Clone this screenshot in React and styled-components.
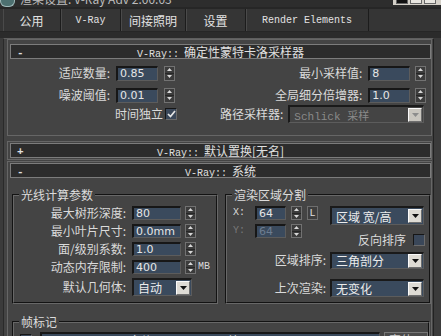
import React from 'react';
import styled, { createGlobalStyle } from 'styled-components';

const CJK = '"Noto Sans CJK SC", "Liberation Sans", sans-serif';
const MONO = '"Liberation Mono", "Noto Sans CJK SC", monospace';
const NUM = '"DejaVu Sans", "Liberation Sans", sans-serif';

const GlobalStyle = createGlobalStyle`
  html, body { margin: 0; padding: 0; background: #3b3b3b; overflow: hidden; }
  * { box-sizing: border-box; }
`;

const Window = styled.div`
  width: 441px;
  height: 336px;
  overflow: hidden;
  display: flex;
  flex-direction: column;
  background: #3b3b3b;
  font-family: ${CJK};
  font-size: 12px;
  color: #dadada;
`;

/* title bar (mostly cut off) */
const TitleBar = styled.div`
  height: 9px;
  flex-shrink: 0;
  display: flex;
  align-items: flex-end;
  background: #2d2d2d;
  border-bottom: 2px solid #262626;
  overflow: hidden;
`;
const TitleIcon = styled.div`
  align-self: flex-start;
  width: 15px;
  height: 7px;
  margin-right: 5px;
  background: #4d7070;
  border: 1px solid #9fb8b8;
  border-top: none;
  border-radius: 0 0 6px 6px;
`;
const TitleText = styled.span`
  line-height: 16px;
  color: #bdbdbd;
  white-space: nowrap;
`;
const WinButtons = styled.div`
  align-self: flex-start;
  margin-left: auto;
  width: 48px;
  height: 5px;
  display: flex;
  gap: 2px;
  padding: 0 3px;
  background: #d4d0c8;
`;
const WinBtn = styled.div`
  width: 12px;
  height: 4px;
  background: ${p => (p.$dark ? '#111' : '#e8e6e0')};
  border: 1px solid #666;
  border-top: none;
`;

/* tabs */
const TabBar = styled.div`
  height: 23px;
  flex-shrink: 0;
  display: flex;
  padding-left: 3px;
  background: #353535;
  border-bottom: 1px solid #262626;
`;
const Tab = styled.div`
  width: ${p => p.$w}px;
  display: flex;
  align-items: center;
  justify-content: center;
  font-family: ${p => (p.$mono ? MONO : CJK)};
  font-size: ${p => (p.$mono ? 10 : 12)}px;
  color: #e2e2e2;
  border-right: 1px solid #1c1c1c;
  box-shadow: inset 1px 0 0 #4a4a4a;
`;
const TabGap = styled.div`
  height: 6px;
  flex-shrink: 0;
  background: #2b2b2b;
`;

/* rollout panel */
const Panel = styled.div`
  flex: 1;
  min-height: 0;
  margin: 0 7px 0 3px;
  padding: 0 1px 0 3px;
  background: #444;
  border-top: 1px solid #5e5e5e;
  border-left: 1px solid #2a2a2a;
  border-right: 1px solid #222;
  display: flex;
  flex-direction: column;
  overflow: hidden;
`;
const Rollout = styled.section`
  flex-shrink: 0;
  margin-top: ${p => p.$mt || 0}px;
  padding: ${p => p.$pt || 0}px 0 ${p => p.$pb || 0}px;
  border: 1px solid #666;
`;
const RolloutHeader = styled.div`
  height: 15px;
  margin-left: 2px;
  border: 1px solid #7c7c7c;
  background: #2c2c2c;
  display: grid;
  grid-template-columns: 18px 1fr 18px;
  align-items: center;
  line-height: 13px;
  color: #e0e0e0;
`;
const Sign = styled.span`
  padding-left: 6px;
  font-family: ${MONO};
  font-size: 11px;
  font-weight: bold;
`;
const HeaderTitle = styled.span`
  text-align: center;
  white-space: nowrap;
`;
const Latin = styled.span`
  font-family: ${MONO};
  font-size: 10px;
  margin-right: 5px;
`;

/* sampler rollout body */
const SamplerGrid = styled.div`
  display: grid;
  grid-template-columns: 212px 1fr;
  grid-template-rows: 22px 22px 16px;
  margin-top: 3px;
`;
const Cell = styled.div`
  display: flex;
  align-items: center;
  justify-content: flex-end;
  padding-right: ${p => p.$pr}px;
`;

/* generic controls */
const Row = styled.div`
  display: flex;
  align-items: center;
  height: ${p => p.$h}px;
  margin-top: ${p => p.$mt || 0}px;
  justify-content: ${p => (p.$end ? 'flex-end' : 'flex-start')};
  padding-right: ${p => p.$pr || 0}px;
`;
const Label = styled.span`
  flex-shrink: 0;
  white-space: nowrap;
  width: ${p => (p.$w ? `${p.$w}px` : 'auto')};
  text-align: ${p => (p.$left ? 'left' : 'right')};
  padding-left: ${p => p.$pl || 0}px;
  padding-right: ${p => p.$pr || 0}px;
  margin-right: ${p => p.$mr || 0}px;
  color: ${p => (p.$dim ? '#7a7a7a' : '#dadada')};
  font-family: ${p => (p.$mono ? MONO : CJK)};
  font-size: ${p => (p.$mono ? 10 : 12)}px;
  line-height: 14px;
`;
const Field = styled.div`
  flex-shrink: 0;
  width: ${p => p.$w}px;
  height: ${p => p.$h || 14}px;
  margin-left: ${p => p.$ml || 0}px;
  background: #3a4a5d;
  border-style: solid;
  border-width: 2px 1px 1px 2px;
  border-color: #171717 #5c5c5c #5c5c5c #171717;
  padding-left: 2px;
  display: flex;
  align-items: center;
  font-family: ${NUM};
  font-size: 11px;
  color: ${p => (p.$dim ? '#6d7d90' : '#e6e6e6')};
  white-space: nowrap;
  overflow: hidden;
`;
const SpinBox = styled.div`
  flex-shrink: 0;
  width: 11px;
  height: ${p => p.$h}px;
  margin-left: ${p => p.$ml}px;
  display: flex;
  flex-direction: column;
  background: #3c3c3c;
  border: 1px solid #727272;
`;
const SpinHalf = styled.div`
  flex: 1;
  display: flex;
  align-items: center;
  justify-content: center;
  & + & { border-top: 1px solid #262626; }
`;
const Spinner = ({ h = 14, ml = 5 }) => (
  <SpinBox $h={h} $ml={ml}>
    <SpinHalf>
      <svg width="5" height="3" viewBox="0 0 5 3"><path d="M2.5 0L5 3H0z" fill="#d8d8d8" /></svg>
    </SpinHalf>
    <SpinHalf>
      <svg width="5" height="3" viewBox="0 0 5 3"><path d="M0 0h5L2.5 3z" fill="#d8d8d8" /></svg>
    </SpinHalf>
  </SpinBox>
);
const CheckBox = styled.div`
  flex-shrink: 0;
  width: 12px;
  height: 12px;
  margin-left: ${p => p.$ml || 0}px;
  margin-right: ${p => p.$mr || 0}px;
  background: #3a4759;
  border-style: solid;
  border-width: 1px;
  border-color: #161616 #6a6a6a #6a6a6a #161616;
  display: flex;
  align-items: center;
  justify-content: center;
`;
const Check = ({ checked, ml, mr }) => (
  <CheckBox $ml={ml} $mr={mr}>
    {checked && (
      <svg width="9" height="8" viewBox="0 0 9 8">
        <path d="M1 4l2.5 2.5L8 1" stroke="#e6e6e6" strokeWidth="1.7" fill="none" />
      </svg>
    )}
  </CheckBox>
);
const ComboBox = styled.div`
  flex-shrink: 0;
  width: ${p => p.$w}px;
  height: ${p => p.$h}px;
  margin-right: ${p => p.$mr || 0}px;
  display: flex;
  align-items: center;
  padding-left: 4px;
  background: ${p => (p.$disabled ? '#444' : '#3a4a5d')};
  border-style: solid;
  border-width: 2px 1px 1px 2px;
  border-color: #1a1a1a #5c5c5c #5c5c5c #1a1a1a;
  color: ${p => (p.$disabled ? '#8a8a8a' : '#ececec')};
  font-family: ${p => (p.$mono ? MONO : CJK)};
  font-size: ${p => (p.$mono ? 11 : 12)}px;
  white-space: nowrap;
`;
const ComboText = styled.span`
  flex: 1;
  overflow: hidden;
`;
const DropBtn = styled.div`
  flex-shrink: 0;
  width: 14px;
  height: 14px;
  margin-right: 1px;
  display: flex;
  align-items: center;
  justify-content: center;
  background: ${p => (p.$disabled ? '#c9c6bf' : '#dedbd4')};
  border: 1px solid;
  border-color: #fafafa #6e6e6e #6e6e6e #fafafa;
`;
const Combo = ({ w, h = 18, text, disabled, mono, mr }) => (
  <ComboBox $w={w} $h={h} $disabled={disabled} $mono={mono} $mr={mr}>
    <ComboText>{text}</ComboText>
    <DropBtn $disabled={disabled}>
      <svg width="7" height="4" viewBox="0 0 7 4">
        <path d="M0 0h7L3.5 4z" fill={disabled ? '#8c8c8c' : '#111'} />
      </svg>
    </DropBtn>
  </ComboBox>
);
const LockBtn = styled.div`
  flex-shrink: 0;
  width: 11px;
  height: 14px;
  margin-left: 5px;
  display: flex;
  align-items: center;
  justify-content: center;
  background: #3e3e3e;
  border: 1px solid #6e6e6e;
  font-family: ${MONO};
  font-size: 10px;
  color: #e0e0e0;
`;

/* group boxes */
const GroupRow = styled.div`
  display: grid;
  grid-template-columns: 206px 206px;
  column-gap: 7px;
  margin: 9px 1px 0 4px;
`;
const Group = styled.fieldset`
  margin: ${p => p.$m || 0};
  min-width: 0;
  padding: 1px 0 4px;
  border: 2px groove #686868;
`;
const Legend = styled.legend`
  margin-left: 5px;
  padding: 0 2px;
  line-height: 16px;
  color: #dcdcdc;
`;
const SplitTop = styled.div`
  display: flex;
`;
const XYCol = styled.div`
  display: flex;
  flex-direction: column;
`;
const ComboCol = styled.div`
  margin-left: auto;
  margin-right: 5px;
  width: 94px;
  display: flex;
  flex-direction: column;
  padding-top: 2px;
`;
const StampBtn = styled.div`
  flex-shrink: 0;
  margin-left: 4px;
  width: 44px;
  height: 16px;
  background: #4a4a4a;
  border: 1px solid #777;
  color: #cfcfcf;
  text-align: center;
  line-height: 14px;
`;

export default function App() {
  return (
    <Window>
      <GlobalStyle />
      <TitleBar>
        <TitleIcon />
        <TitleText>渲染设置: V-Ray Adv 2.00.03</TitleText>
        <WinButtons>
          <WinBtn $dark />
          <WinBtn />
          <WinBtn />
        </WinButtons>
      </TitleBar>

      <TabBar>
        <Tab $w={58}>公用</Tab>
        <Tab $w={60} $mono>V-Ray</Tab>
        <Tab $w={65}>间接照明</Tab>
        <Tab $w={60}>设置</Tab>
        <Tab $w={123} $mono>Render Elements</Tab>
      </TabBar>
      <TabGap />

      <Panel>
        <Rollout $pt={4} $pb={13}>
          <RolloutHeader>
            <Sign>-</Sign>
            <HeaderTitle><Latin>V-Ray::</Latin>确定性蒙特卡洛采样器</HeaderTitle>
          </RolloutHeader>
          <SamplerGrid>
            <Cell $pr={45}>
              <Label $mr={6}>适应数量:</Label>
              <Field $w={42} $h={15}>0.85</Field>
              <Spinner h={15} ml={6} />
            </Cell>
            <Cell $pr={16}>
              <Label $mr={6}>最小采样值:</Label>
              <Field $w={42} $h={15}>8</Field>
              <Spinner h={15} ml={5} />
            </Cell>
            <Cell $pr={45}>
              <Label $mr={6}>噪波阈值:</Label>
              <Field $w={42} $h={15}>0.01</Field>
              <Spinner h={15} ml={6} />
            </Cell>
            <Cell $pr={16}>
              <Label $mr={6}>全局细分倍增器:</Label>
              <Field $w={42} $h={15}>1.0</Field>
              <Spinner h={15} ml={5} />
            </Cell>
            <Cell $pr={45}>
              <Label $mr={2}>时间独立</Label>
              <Check checked mr={-2} />
            </Cell>
            <Cell $pr={16}>
              <Label $mr={5}>路径采样器:</Label>
              <Combo w={136} h={18} text="Schlick 采样" disabled mono mr={2} />
            </Cell>
          </SamplerGrid>
        </Rollout>

        <Rollout $mt={5} $pt={1} $pb={1}>
          <RolloutHeader>
            <Sign>+</Sign>
            <HeaderTitle><Latin>V-Ray::</Latin>默认置换[无名]</HeaderTitle>
          </RolloutHeader>
        </Rollout>

        <Rollout $mt={1} $pt={1}>
          <RolloutHeader>
            <Sign>-</Sign>
            <HeaderTitle><Latin>V-Ray::</Latin>系统</HeaderTitle>
          </RolloutHeader>

          <GroupRow>
            <Group>
              <Legend>光线计算参数</Legend>
              <Row $h={18}>
                <Label $w={118} $pr={6}>最大树形深度:</Label>
                <Field $w={49} $h={14}>80</Field>
                <Spinner h={14} ml={4} />
              </Row>
              <Row $h={18}>
                <Label $w={118} $pr={6}>最小叶片尺寸:</Label>
                <Field $w={49} $h={14}>0.0mm</Field>
                <Spinner h={14} ml={4} />
              </Row>
              <Row $h={18}>
                <Label $w={118} $pr={6}>面/级别系数:</Label>
                <Field $w={49} $h={14}>1.0</Field>
                <Spinner h={14} ml={4} />
              </Row>
              <Row $h={18}>
                <Label $w={118} $pr={6}>动态内存限制:</Label>
                <Field $w={49} $h={14}>400</Field>
                <Spinner h={14} ml={4} />
                <Label $mono $pl={2}>MB</Label>
              </Row>
              <Row $h={22}>
                <Label $w={118} $pr={6}>默认几何体:</Label>
                <Combo w={60} h={18} text="自动" />
              </Row>
            </Group>

            <Group>
              <Legend>渲染区域分割</Legend>
              <SplitTop>
                <XYCol>
                  <Row $h={18}>
                    <Label $w={28} $pl={6} $left $mono>X:</Label>
                    <Field $w={31} $h={14}>64</Field>
                    <Spinner h={14} ml={5} />
                    <LockBtn>L</LockBtn>
                  </Row>
                  <Row $h={18}>
                    <Label $w={28} $pl={6} $left $mono $dim>Y:</Label>
                    <Field $w={31} $h={14} $dim>64</Field>
                    <Spinner h={14} ml={5} />
                  </Row>
                </XYCol>
                <ComboCol>
                  <Combo w={94} h={19} text="区域 宽/高" />
                  <Row $h={12} $mt={9} $end>
                    <Label $mr={7}>反向排序</Label>
                    <Check mr={-1} />
                  </Row>
                </ComboCol>
              </SplitTop>
              <Row $h={20} $mt={4} $end $pr={5}>
                <Label $mr={4}>区域排序:</Label>
                <Combo w={94} h={17} text="三角剖分" />
              </Row>
              <Row $h={20} $mt={8} $end $pr={5}>
                <Label $mr={4}>上次渲染:</Label>
                <Combo w={94} h={18} text="无变化" />
              </Row>
            </Group>
          </GroupRow>

          <Group $m="10px 1px 0 4px">
            <Legend>帧标记</Legend>
            <Row $h={18}>
              <Check ml={6} mr={8} />
              <Field $w={340} $h={16}>%vrayversion | 文件: %filename | 帧: %frame</Field>
              <StampBtn>字体...</StampBtn>
            </Row>
          </Group>
        </Rollout>
      </Panel>
    </Window>
  );
}
